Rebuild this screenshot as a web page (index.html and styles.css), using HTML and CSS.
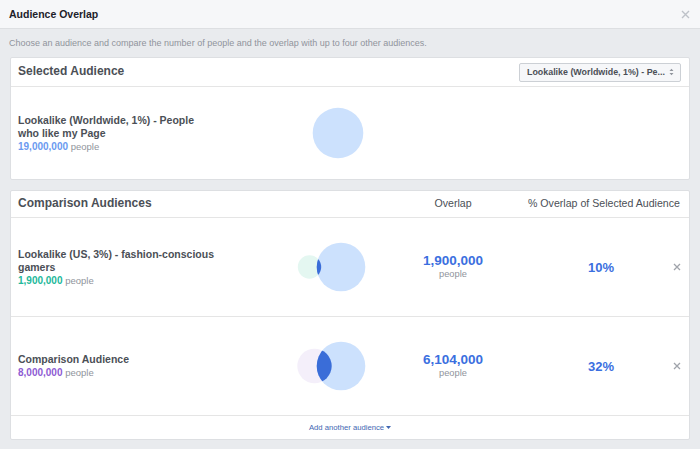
FILE: index.html
```html
<!DOCTYPE html>
<html>
<head>
<meta charset="utf-8">
<link rel="stylesheet" href="styles.css">
</head>
<body>
<div class="dialog">
  <div class="topbar">
    <span class="title">Audience Overlap</span>
    <svg class="close-top" width="9" height="9" viewBox="0 0 9 9"><path d="M1 1L8 8M8 1L1 8" stroke="#bec2c9" stroke-width="1.4"/></svg>
  </div>
  <div class="content">
    <p class="desc">Choose an audience and compare the number of people and the overlap with up to four other audiences.</p>

    <div class="card">
      <div class="card-head">
        <span class="card-title">Selected Audience</span>
        <div class="select">
          <span class="sel-text">Lookalike (Worldwide, 1%) - Pe...</span>
          <svg class="sel-arrow" width="5" height="8" viewBox="0 0 5 8"><path d="M0.5 3L2.5 0.8L4.5 3Z M0.5 5L2.5 7.2L4.5 5Z" fill="#90949c"/></svg>
        </div>
      </div>
      <div class="sel-body">
        <div class="aud">
          <div class="aud-name">Lookalike (Worldwide, 1%) - People<br>who like my Page</div>
          <div class="aud-count"><b class="c-blue">19,000,000</b> people</div>
        </div>
        <svg class="venn" width="98" height="60" viewBox="0 0 98 60"><circle cx="58" cy="30" r="25.3" fill="#cce1fd"/></svg>
      </div>
    </div>

    <div class="card card2">
      <div class="grid-row grid-head">
        <span class="card-title">Comparison Audiences</span>
        <span></span>
        <span class="col-h">Overlap</span>
        <span class="col-h">% Overlap of Selected Audience</span>
        <span></span>
      </div>
      <div class="grid-row row">
        <div class="aud">
          <div class="aud-name">Lookalike (US, 3%) - fashion-conscious<br>gamers</div>
          <div class="aud-count"><b class="c-teal">1,900,000</b> people</div>
        </div>
        <svg class="venn" width="98" height="60" viewBox="0 0 98 60">
          <defs><clipPath id="c1"><circle cx="29.5" cy="30" r="11.7"/></clipPath></defs>
          <circle cx="29.5" cy="30" r="11.7" fill="#e4f7f1"/>
          <circle cx="61" cy="30" r="24.3" fill="#cce1fd"/>
          <circle cx="61" cy="30" r="24.3" fill="#3a6dd8" clip-path="url(#c1)"/>
        </svg>
        <div class="num"><b>1,900,000</b><span>people</span></div>
        <div class="pct">10%</div>
        <svg class="x" width="8" height="8" viewBox="0 0 8 8"><path d="M1 1L7 7M7 1L1 7" stroke="#a0a4ab" stroke-width="1.3"/></svg>
      </div>
      <div class="grid-row row">
        <div class="aud">
          <div class="aud-name">Comparison Audience</div>
          <div class="aud-count"><b class="c-purple">8,000,000</b> people</div>
        </div>
        <svg class="venn" width="98" height="60" viewBox="0 0 98 60">
          <defs><clipPath id="c2"><circle cx="34.5" cy="30" r="17.2"/></clipPath></defs>
          <circle cx="34.5" cy="30" r="17.2" fill="#f4effa"/>
          <circle cx="61" cy="30" r="24.3" fill="#cce1fd"/>
          <circle cx="61" cy="30" r="24.3" fill="#3a6dd8" clip-path="url(#c2)"/>
        </svg>
        <div class="num"><b>6,104,000</b><span>people</span></div>
        <div class="pct">32%</div>
        <svg class="x" width="8" height="8" viewBox="0 0 8 8"><path d="M1 1L7 7M7 1L1 7" stroke="#a0a4ab" stroke-width="1.3"/></svg>
      </div>
      <div class="foot">
        <a class="add">Add another audience <svg width="5" height="3" viewBox="0 0 5 3"><path d="M0 0H5L2.5 3Z" fill="#4267b2"/></svg></a>
      </div>
    </div>
  </div>
</div>
</body>
</html>
```
FILE: styles.css
```css
* { box-sizing: border-box; }
html, body { margin: 0; padding: 0; }
body {
  width: 700px;
  height: 449px;
  overflow: hidden;
  font-family: "Liberation Sans", Arial, sans-serif;
  color: #4b4f56;
  background: #e9ebee;
}
.dialog { width: 700px; height: 449px; display: flex; flex-direction: column; }
.topbar {
  height: 29px;
  background: #f6f7f9;
  border-bottom: 1px solid #dddfe2;
  display: flex;
  align-items: center;
  justify-content: space-between;
  padding: 0 10px 0 9px;
}
.title { font-size: 10.5px; font-weight: bold; color: #1d2129; }
.content { padding: 0 10px; }
.desc {
  margin: 7px 0 7px -1px;
  font-size: 9px;
  line-height: 14px;
  color: #90949c;
  white-space: nowrap;
}
.card {
  background: #fff;
  border: 1px solid #dddfe2;
  border-radius: 2px;
}
.card-head {
  height: 29px;
  border-bottom: 1px solid #e5e5e5;
  display: flex;
  align-items: center;
  justify-content: space-between;
  padding: 0 8px 2px 7px;
}
.card-title { font-size: 12px; font-weight: bold; color: #4b4f56; white-space: nowrap; }
.select {
  width: 162px;
  height: 19px;
  margin-top: 2px;
  border: 1px solid #ccd0d5;
  border-radius: 2px;
  background: #f6f7f9;
  display: flex;
  align-items: center;
  justify-content: space-between;
  gap: 4px;
  padding: 0 6px 0 7px;
  font-size: 8.9px;
  font-weight: bold;
  color: #4b4f56;
  white-space: nowrap;
}
.sel-text { overflow: hidden; }
.sel-arrow { flex-shrink: 0; }
.sel-body {
  height: 92px;
  display: grid;
  grid-template-columns: 262px 98px;
  align-items: center;
  padding-left: 7px;
}
.aud-name { font-size: 10.5px; font-weight: bold; line-height: 13px; color: #4b4f56; }
.aud-count { font-size: 9.5px; line-height: 13px; color: #90949c; }
.aud-count b { font-size: 10px; }
.c-blue { color: #6b9af0; }
.c-teal { color: #22b89a; }
.c-purple { color: #8e5bd3; }
.card2 { margin-top: 10px; }
.grid-row {
  display: grid;
  grid-template-columns: 262px 98px 150px 146px 6px;
  align-items: center;
  padding-left: 7px;
}
.grid-head { height: 27px; border-bottom: 1px solid #e5e5e5; padding-bottom: 2px; }
.col-h { font-size: 10.6px; color: #4b4f56; text-align: center; white-space: nowrap; }
.row { height: 99px; border-bottom: 1px solid #e5e5e5; }
.num { display: flex; flex-direction: column; align-items: center; }
.num b { font-size: 13.5px; line-height: 15px; color: #3b6fe0; }
.num span { font-size: 9.3px; line-height: 13px; color: #90949c; }
.pct { text-align: center; font-size: 13px; font-weight: bold; color: #3b6fe0; }
.x { justify-self: center; }
.foot {
  height: 23px;
  display: flex;
  align-items: center;
  justify-content: center;
}
.add { font-size: 7.7px; color: #4267b2; display: flex; align-items: center; gap: 2px; }
```
